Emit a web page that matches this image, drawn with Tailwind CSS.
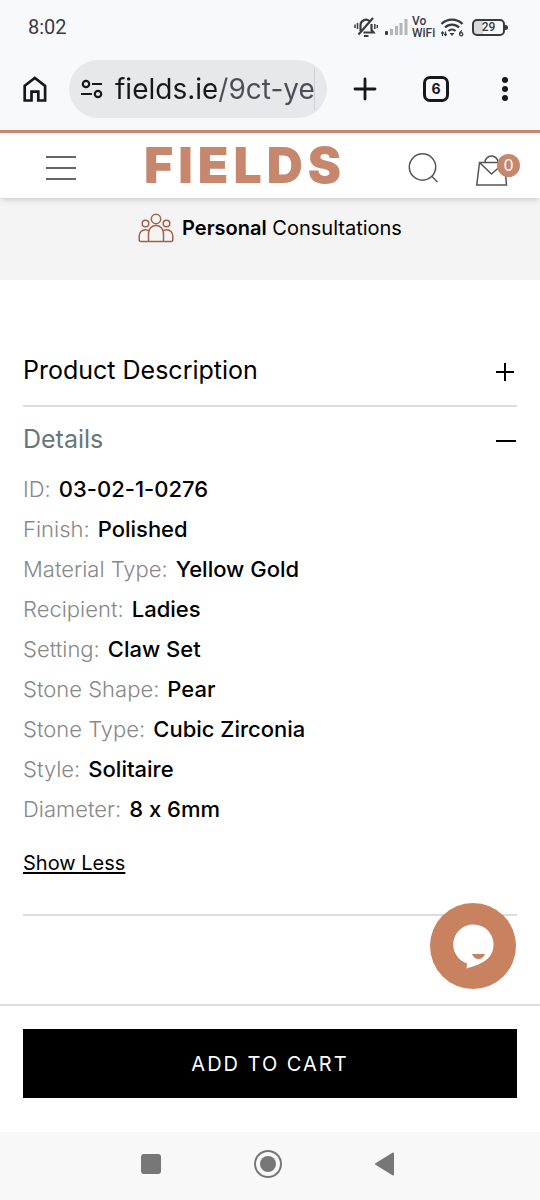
<!DOCTYPE html>
<html lang="en">
<head>
<meta charset="utf-8">
<meta name="viewport" content="width=device-width, initial-scale=1">
<title>Fields – Product details</title>
<script src="https://cdn.jsdelivr.net/npm/@tailwindcss/browser@4"></script>
</head>
<body class="flex min-h-screen flex-col bg-white font-['Inter',sans-serif] text-black">

<!-- Phone status bar and browser toolbar -->
<div class="bg-[#f8f9fd]">
  <div class="flex h-[54px] items-center justify-between pr-8 pl-7 font-['Roboto',sans-serif] text-[#3a3b3f]">
    <span class="text-xl">8:02</span>
    <div class="flex items-center gap-1">
      <svg class="h-6 w-6" viewBox="0 0 24 24" fill="none" stroke="currentColor" stroke-width="2" aria-label="Silent">
        <path d="M6.500 16V10a5.500 5.500 0 0 1 9-4M17.500 9v6l2 2.500H9.500M19 3 4.500 19.500" stroke-width="2.200"/><path d="M10 21h4.500" stroke-width="2"/><path d="M3.500 8v6M1 9.500v3.500M20.800 9v5M23.300 10v3" stroke-width="1.500"/>
      </svg>
      <svg class="ml-0.5 h-5 w-6" viewBox="0 0 24 20" aria-label="Signal"><rect x="1" y="14" width="3" height="4" rx="1" fill="#3a3b3f"/><g fill="#b4b5b9"><rect x="6" y="12" width="3" height="6"/><rect x="11" y="9" width="3" height="9"/><rect x="15.500" y="6" width="3" height="12"/><rect x="20.500" y="2" width="3" height="16"/></g></svg>
      <span class="flex w-6 flex-col text-xs leading-3 font-medium"><span>Vo</span><span>WiFi</span></span>
      <svg class="h-5 w-6" viewBox="0 0 24 20" fill="none" stroke="currentColor" aria-label="Wi-Fi 6"><path d="M1.500 7a15 15 0 0 1 21 0M5 10.500a10 10 0 0 1 14 0M8.500 14a5 5 0 0 1 7 0" stroke-width="2.300"/><path d="m12 19-2.500-3h5z" fill="currentColor" stroke="none"/><path d="M2.500 19v-4m-1.300 1.500L2.500 15l1.300 1.500M5.500 14.500v4m-1.300-1.500 1.300 1.500L6.800 17" stroke-width="1.200"/><path d="M22 13.500c-1.700.8-2.400 2-2.400 3.500" stroke-width="1.300"/><circle cx="21.200" cy="17.200" r="1.600" stroke-width="1.300"/></svg>
      <div class="ml-1 flex items-center">
        <span class="flex h-[17px] w-[33px] items-center justify-center rounded-[5px] border-2 border-current bg-linear-to-r from-[#d8d9dd] from-30% to-transparent to-30% text-xs font-medium">29</span>
        <span class="h-[5px] w-[3px] rounded-r bg-current"></span>
      </div>
    </div>
  </div>
  <div class="flex h-[76px] items-start pt-1.5 pr-[23px] pl-[23px] text-[#16181d]">
    <button class="mt-4 h-[26px] w-6 shrink-0" aria-label="Home"><svg class="h-full w-full" viewBox="0 0 24 26" fill="none" stroke="currentColor" stroke-width="2.700"><path d="M1.700 9.800 11.800 2l10.300 7.800v14.700h-6.800v-8.800H8.500v8.800H1.700z"/></svg></button>
    <div class="ml-[22px] flex h-[58px] min-w-0 flex-1 items-center gap-3 rounded-full bg-[#e7e8ec] px-3">
      <svg class="h-5 w-[22px] shrink-0" viewBox="0 0 22 20" fill="none" stroke="currentColor" stroke-width="2.200"><circle cx="5" cy="5" r="3.200"/><path d="M11 5h10M0 15h11"/><circle cx="17" cy="15" r="3.200"/></svg>
      <input type="text" aria-label="Address" value="fields.ie/9ct-ye" class="w-full min-w-0 border-r border-[#cfd0d5] bg-linear-to-r from-[#16181d] from-[101px] to-[#4b4e57] to-[101px] bg-clip-text font-['Inter',sans-serif] text-[28px] text-transparent outline-none">
    </div>
    <button class="mt-[13px] ml-6 h-8 w-7 shrink-0" aria-label="New tab"><svg class="h-full w-full" viewBox="0 0 28 32" fill="none" stroke="currentColor" stroke-width="2.800" stroke-linecap="round"><path d="M4 16h20M14 6v20"/></svg></button>
    <button class="mt-4 ml-11 h-[26px] w-[26px] shrink-0 rounded-[7px] border-3 border-current text-sm leading-5 font-bold" aria-label="6 open tabs">6</button>
    <button class="mt-4 ml-11 h-[26px] w-6 shrink-0" aria-label="Menu"><svg class="h-full w-full" viewBox="0 0 24 26" fill="currentColor"><circle cx="12" cy="4" r="3"/><circle cx="12" cy="13" r="3"/><circle cx="12" cy="22" r="3"/></svg></button>
  </div>
</div>

<!-- Shop header -->
<header class="relative flex h-[68px] items-center border-t-3 border-[#c6876c] bg-white pt-1 pr-5 pl-[46px] shadow-md">
  <button class="flex h-6 w-[30px] flex-col justify-between text-[#666]" aria-label="Open menu">
    <span class="h-0.5 w-full bg-current"></span><span class="h-0.5 w-full bg-current"></span><span class="h-0.5 w-full bg-current"></span>
  </button>
  <a href="#" class="ml-[68px] pb-1.5 text-[50px] leading-none font-black tracking-widest text-[#c6876c]">FIELDS</a>
  <div class="ml-auto flex items-center gap-9 text-[#555]">
    <button class="h-8 w-8" aria-label="Search"><svg class="h-full w-full" viewBox="0 0 32 32" fill="none" stroke="currentColor" stroke-width="1.500"><circle cx="14.500" cy="15" r="13.200"/><path d="m24 24.500 5.500 5.500"/></svg></button>
    <button class="relative mt-1 h-8 w-11" aria-label="Bag, 0 items">
      <svg class="h-full w-full" viewBox="0 0 44 32" fill="none" stroke="currentColor" stroke-width="1.500"><path d="M3.500 8.500h25l2 22.500H.8zM9 8.500a6.500 6.500 0 0 1 13 0M3.500 8.500 15.500 20l13-11.500"/></svg>
      <span class="absolute top-0 right-0 flex h-[23px] w-[23px] items-center justify-center rounded-full bg-[#c6876c] text-base text-white">0</span>
    </button>
  </div>
</header>

<div class="flex h-[82px] items-start justify-center gap-2 bg-[#f4f4f4] pt-3">
  <svg class="mt-0.5 h-8 w-9" viewBox="0 0 36 32" fill="none" stroke="#a06248" stroke-width="1.500"><circle cx="18" cy="7" r="4.700"/><circle cx="7.500" cy="11.500" r="3.300"/><circle cx="28.500" cy="11.500" r="3.300"/><path d="M10.500 29.500V21a7.500 7.500 0 0 1 15 0v8.500M11 19c-1-1-2.200-1.300-3.500-1.300a6.300 6.300 0 0 0-6.300 6.300v4q0 1.500 1.500 1.500h30.600q1.500 0 1.500-1.500v-4a6.300 6.300 0 0 0-6.300-6.300c-1.300 0-2.500.3-3.500 1.300"/></svg>
  <p class="text-xl leading-9"><strong class="font-semibold">Personal</strong> Consultations</p>
</div>

<!-- Product information -->
<main class="flex-1 px-[23px] pt-14">
  <h2 class="border-b-2 border-[#ddd]">
    <button class="flex h-[69px] w-full items-center justify-between text-left text-[25px]">Product Description
      <svg class="h-6 w-6" viewBox="0 0 24 24" fill="none" stroke="currentColor" stroke-width="2"><path d="M3 13h18M12 4v18"/></svg></button>
  </h2>
  <h2>
    <button class="flex h-[66px] w-full items-center justify-between text-left text-[25px] text-[#66777a]">Details
      <svg class="h-6 w-6 text-black" viewBox="0 0 24 24" fill="none" stroke="currentColor" stroke-width="2"><path d="M3 13h20"/></svg></button>
  </h2>
  <dl class="grid gap-2 text-[22px] leading-8 [font-feature-settings:'calt'_0]">
    <div class="flex gap-2"><dt class="font-light text-[#888]">ID:</dt><dd class="font-medium">03-02-1-0276</dd></div>
    <div class="flex gap-2"><dt class="font-light text-[#888]">Finish:</dt><dd class="font-medium">Polished</dd></div>
    <div class="flex gap-2"><dt class="font-light text-[#888]">Material Type:</dt><dd class="font-medium">Yellow Gold</dd></div>
    <div class="flex gap-2"><dt class="font-light text-[#888]">Recipient:</dt><dd class="font-medium">Ladies</dd></div>
    <div class="flex gap-2"><dt class="font-light text-[#888]">Setting:</dt><dd class="font-medium">Claw Set</dd></div>
    <div class="flex gap-2"><dt class="font-light text-[#888]">Stone Shape:</dt><dd class="font-medium">Pear</dd></div>
    <div class="flex gap-2"><dt class="font-light text-[#888]">Stone Type:</dt><dd class="font-medium">Cubic Zirconia</dd></div>
    <div class="flex gap-2"><dt class="font-light text-[#888]">Style:</dt><dd class="font-medium">Solitaire</dd></div>
    <div class="flex gap-2"><dt class="font-light text-[#888]">Diameter:</dt><dd class="font-medium">8 x 6mm</dd></div>
  </dl>
  <button class="mt-6 block text-xl underline decoration-2 underline-offset-2">Show Less</button>
  <hr class="mt-[37px] border-t-2 border-[#ddd]">
</main>

<!-- Purchase bar with the chat launcher floating above it -->
<div class="relative border-t-2 border-[#ddd] px-[23px] pt-[23px] pb-[34px]">
  <button class="absolute right-6 bottom-full mb-[17px] h-[86px] w-[86px] rounded-full bg-[#c98260]" aria-label="Open chat">
    <svg class="h-full w-full" viewBox="0 0 86 86"><path d="M43.500 21.500a20 20 0 0 1 20 20c0 13-9 19-27 24l.5-5A20 20 0 0 1 43.500 21.500z" fill="#fff"/><path d="M42 51h13q-2 5-6.500 5T42 51z" fill="#c98260"/></svg>
  </button>
  <button class="h-[69px] w-full bg-black text-xl tracking-widest text-white">ADD TO CART</button>
</div>

<!-- Phone navigation -->
<nav class="flex h-[68px] items-center justify-center gap-[89px] bg-[#f8f8f8] pr-1 pb-1 text-[#777]">
  <button class="h-7 w-7" aria-label="Recent apps"><svg viewBox="0 0 28 28" fill="currentColor"><rect x="4" y="4" width="20" height="20" rx="3"/></svg></button>
  <button class="h-7 w-7" aria-label="Home screen"><svg viewBox="0 0 28 28"><circle cx="14" cy="14" r="13" fill="none" stroke="currentColor" stroke-width="2"/><circle cx="14" cy="14" r="8" fill="currentColor"/></svg></button>
  <button class="h-7 w-7" aria-label="Back"><svg viewBox="0 0 28 28" fill="currentColor" stroke="currentColor" stroke-width="2" stroke-linejoin="round"><path d="M22 3.500v21L5 14z"/></svg></button>
</nav>
</body>
</html>
